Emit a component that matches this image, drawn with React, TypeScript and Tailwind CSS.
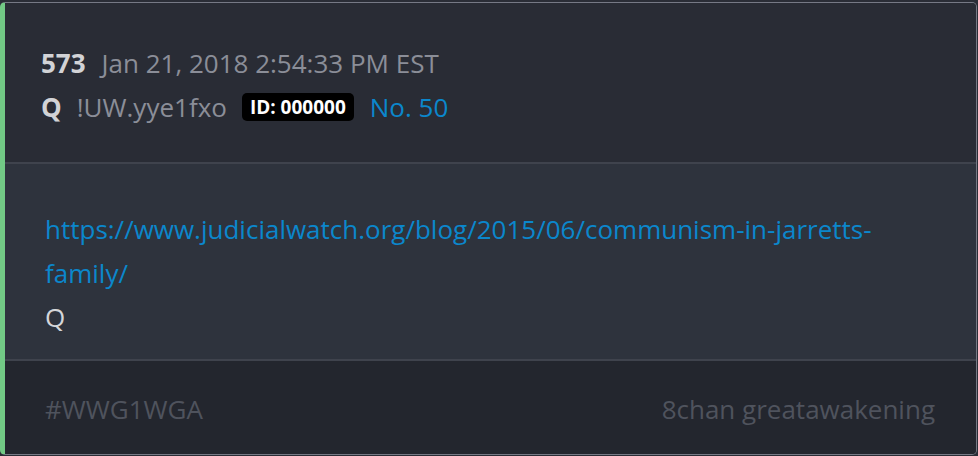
export default function App() {
  return (
    <div className="w-[978px] h-[456px] bg-[#2a2d36] pt-[2px] font-['Open_Sans',sans-serif]">
      <div className="w-[977px] h-[453px] flex flex-col overflow-hidden rounded-[5px] border border-[#767985] border-l-[5px] border-l-[#72c985] bg-[#292c35]">
        <div className="h-[159px] shrink-0 pl-[36px] pt-[38px] bg-[#292c35] text-[26px] leading-[44px]">
          <div className="flex items-center h-[44px]">
            <span className="font-bold text-[#d2d3d6]">573</span>
            <span className="ml-[16px] text-[#8b8e98]">Jan 21, 2018 2:54:33 PM EST</span>
          </div>
          <div className="flex items-center h-[44px]">
            <span className="font-bold text-[#d2d3d6]">Q</span>
            <span className="ml-[15px] text-[#8b8e98]">!UW.yye1fxo</span>
            <span className="ml-[15px] rounded-[5px] bg-black px-[8px] h-[28px] flex items-center text-[19px] leading-none font-bold text-white">ID: 000000</span>
            <span className="ml-[16px] text-[#0b87cc]">No. 50</span>
          </div>
        </div>
        <div className="h-[2px] shrink-0 bg-[#3f434d]" />
        <div className="h-[195px] shrink-0 bg-[#2e333d] pl-[40px] pr-[60px] pt-[43px] text-[26px] leading-[44px]">
          <a className="text-[#0b87cc] break-words">https://www.judicialwatch.org/blog/2015/06/communism-in-jarretts-family/</a>
          <div className="text-[#d5d6d9]">Q</div>
        </div>
        <div className="h-[2px] shrink-0 bg-[#3f434d]" />
        <div className="flex-1 bg-[#23262e] flex items-center justify-between pl-[40px] pr-[41px] pt-[3px] text-[26px] text-[#4f535d]">
          <span>#WWG1WGA</span>
          <span>8chan greatawakening</span>
        </div>
      </div>
    </div>
  );
}
